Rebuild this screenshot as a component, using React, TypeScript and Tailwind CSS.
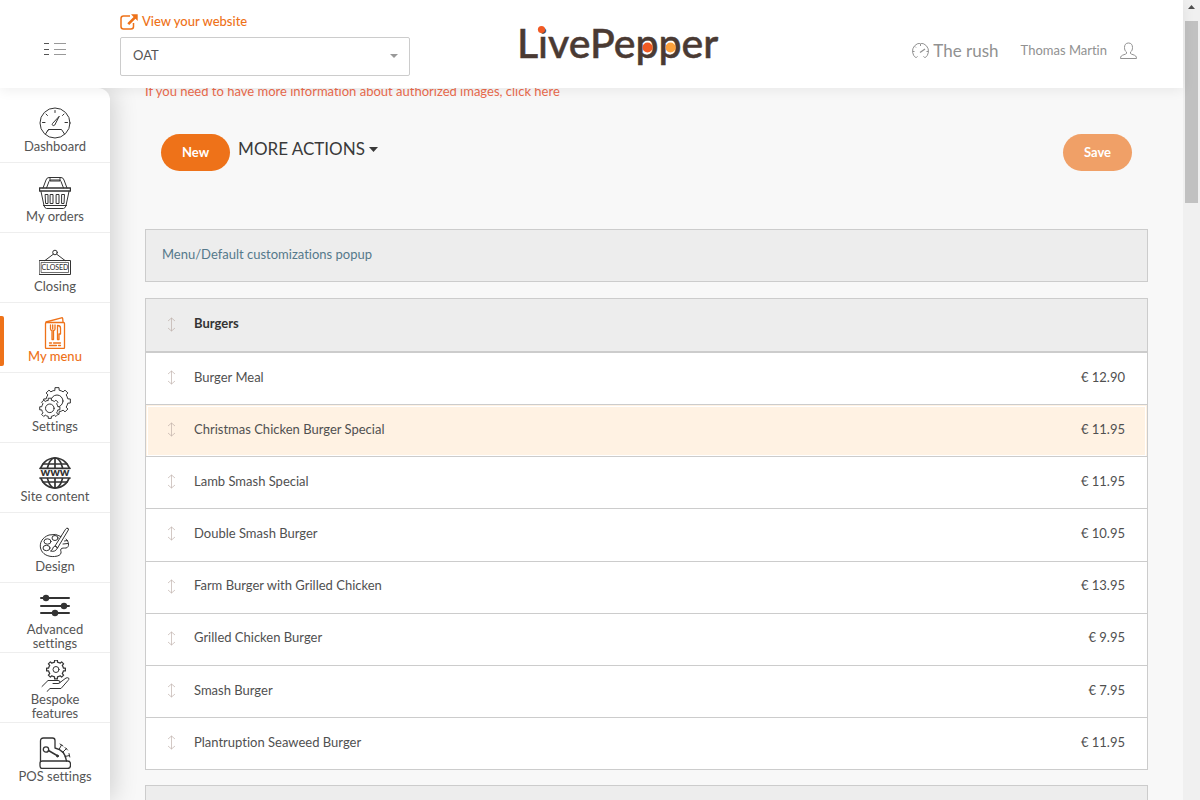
import type { ReactNode } from "react";

function gearPath(cx: number, cy: number, outer: number, inner: number, teeth: number) {
  const step = (Math.PI * 2) / teeth;
  const points: string[] = [];
  for (let i = 0; i < teeth; i++) {
    const a = i * step - Math.PI / 2;
    const corners: [number, number][] = [
      [inner, -0.25],
      [outer, -0.19],
      [outer, 0.19],
      [inner, 0.25],
      [inner, 0.5],
    ];
    for (const [r, k] of corners) {
      points.push(`${(cx + r * Math.cos(a + k * step)).toFixed(2)} ${(cy + r * Math.sin(a + k * step)).toFixed(2)}`);
    }
  }
  return `M${points.join("L")}Z`;
}

function Icon({ children, stroke = 1 }: { children: ReactNode; stroke?: number }) {
  return (
    <svg
      className="size-8 shrink-0"
      viewBox="0 0 32 32"
      fill="none"
      stroke="currentColor"
      strokeWidth={stroke}
      strokeLinecap="round"
      strokeLinejoin="round"
      aria-hidden="true"
    >
      {children}
    </svg>
  );
}

const DashboardIcon = (
  <Icon>
    <circle cx="16" cy="16" r="15" />
    <path d="M16 3.500v2M3.500 15.500H6M26 15.500h2.500M7 7l1.500 1.500M25 7l-1.500 1.500" />
    <path d="M20 9.500l-6.500 7c-1 1.500.8 3 2 1.800z" />
    <path d="M6.500 27l3-4.500h13l3 4.500M9.500 22.500l-1 1.500" />
  </Icon>
);

const OrdersIcon = (
  <Icon>
    <path d="M4 11L7 3Q7.800.5 10 .5h12Q24.200.5 25 3l3 8M7.500 11L10 4.500q.5-1.500 2-1.500h8q1.500 0 2 1.500l2.500 6.500M11 .5v3.500h10V.5" />
    <path d="M.5 11h31v3H.5z" strokeWidth="1.400" />
    <path d="M2 14.500l3 14q.5 2.500 2.500 3h17q2-.5 2.500-3l3-14M4.500 28.500h23" />
    <path d="M6.500 17.500h2.500v9H7zM11.500 17.500H14v9h-2.500zM17.500 17.500H20v9h-2.500zM23 17.500h2.500l-.5 9h-2z" />
  </Icon>
);

const ClosingIcon = (
  <Icon>
    <circle cx="16" cy="5.500" r="2.300" />
    <path d="M14.300 7.200L6 13.500M17.700 7.200l8.300 6.300" />
    <path d="M.5 13.500h31v14H.5z" />
    <path d="M2.500 15.500h27v10h-27z" strokeWidth=".7" />
    <text
      x="16"
      y="23"
      textAnchor="middle"
      fontSize="7"
      fontWeight="500"
      fill="currentColor"
      stroke="none"
      className="font-['Lato',sans-serif]"
    >
      CLOSED
    </text>
  </Icon>
);

const MenuIcon = (
  <Icon stroke={1.3}>
    <path d="M7.500 5.500h17q1 0 1 1v24q0 1-1 1h-17q-1 0-1-1v-24q0-1 1-1z" />
    <path d="M7 5L22.500.8q1-.2 1.200.8l.3 3.500" />
    <path d="M11.500 8v4q0 1.500 1.500 1.500v9h1.500v-9q1.500 0 1.500-1.500V8M13.700 8v4M18.500 8.500v14H20V17h1.500v-6q0-2.500-3-2.500z" />
    <path d="M10.500 26h2M14.500 26h7M10.500 28.500h7M19.500 28.500h2" />
  </Icon>
);

const SettingsIcon = (
  <Icon>
    <path d={gearPath(18, 14, 13.5, 11, 8)} />
    <circle cx="18" cy="14" r="6" />
    <path d={gearPath(10.8, 21.3, 10.2, 8.2, 8)} fill="#fff" />
    <circle cx="10.800" cy="21.300" r="4.300" />
  </Icon>
);

const SiteIcon = (
  <Icon stroke={1.7}>
    <circle cx="16" cy="16" r="15" />
    <ellipse cx="16" cy="16" rx="8" ry="15" />
    <path d="M16 1v30M4 7h24M4 25h24" />
    <path d="M0 11.500h32v9.500H0z" fill="#fff" stroke="none" />
    <path d="M1 11.300h30M1 21h30" />
    <text
      x="16"
      y="19"
      textAnchor="middle"
      fontSize="12"
      fontWeight="900"
      fill="currentColor"
      stroke="none"
      className="font-['Lato',sans-serif]"
    >
      www
    </text>
  </Icon>
);

const DesignIcon = (
  <Icon>
    <path d="M22 9.500Q17 6 10 8C3 10.500.5 16 1.500 21c1.500 6.500 8 9 14 8.500 4-.3 6-1.500 6.500-3.500.4-2-1-2.500 0-4 1-1.300 3-.8 5-1 2-.4 2.700-2 2.500-4.200-.2-2-1.200-3.500-2.500-4.800" />
    <path d="M29 1.500q-1.500-1-2.500.8L16 19l2.500 2L29.300 3q.7-1-.3-1.500z" />
    <path d="M16 19q-2 .5-2.500 3-.5 1.500-2 2 5 1.500 7-3z" />
    <ellipse cx="16" cy="11" rx="3" ry="2.500" />
    <ellipse cx="8.500" cy="14.500" rx="3.500" ry="2.700" />
    <ellipse cx="7.500" cy="21" rx="3.500" ry="2.700" />
    <path d="M24 17l5-.5M25.500 14l3-.5" />
  </Icon>
);

const AdvancedIcon = (
  <Icon stroke={2}>
    <path d="M2 8h28M2 16h28M2 23h28" />
    <g fill="currentColor" stroke="none">
      <circle cx="7" cy="8" r="3.200" />
      <circle cx="25" cy="16" r="3.200" />
      <circle cx="16" cy="23" r="3.200" />
    </g>
  </Icon>
);

const BespokeIcon = (
  <Icon>
    <path d={gearPath(17, 9.5, 9.5, 7.5, 8)} strokeWidth="1.200" />
    <circle cx="17" cy="9.500" r="3" />
    <path d="M3 26.500l6-6h10q2 0 2 1.500T19 23.500h-5M21 22.500l6-4.500q2-.8 3 .5 0 1-1 2l-7 8H11l-3 3" />
  </Icon>
);

const PosIcon = (
  <Icon>
    <path d="M1.500 24V4q0-3 3-3h9q2.500 0 2.500 2.500V11q10 2 11.500 13" strokeWidth="1.300" />
    <path d="M3.500 24h25q3 0 3 3v1.500q0 3-3 3h-25q-2.500 0-2.500-3V26q0-2 2.500-2z" strokeWidth="1.300" />
    <circle cx="7" cy="12.500" r="2.700" strokeWidth="1.300" />
    <path d="M9.500 13.500l8.500 5" strokeWidth="1.500" />
    <circle cx="18.500" cy="19" r="1" fill="currentColor" />
    <path d="M20 12.500L22.500 8M21 7l3 2M23.500 15.500l4-4M26 10.500l2.500 2.500M26 19.500l4.500-1M30 16.500l.8 3.500" />
  </Icon>
);

const navigation: { label: string; icon: ReactNode; active?: boolean }[] = [
  { label: "Dashboard", icon: DashboardIcon },
  { label: "My orders", icon: OrdersIcon },
  { label: "Closing", icon: ClosingIcon },
  { label: "My menu", icon: MenuIcon, active: true },
  { label: "Settings", icon: SettingsIcon },
  { label: "Site content", icon: SiteIcon },
  { label: "Design", icon: DesignIcon },
  { label: "Advanced settings", icon: AdvancedIcon },
  { label: "Bespoke features", icon: BespokeIcon },
  { label: "POS settings", icon: PosIcon },
];

const burgers: { name: string; price: string; highlighted?: boolean }[] = [
  { name: "Burger Meal", price: "€ 12.90" },
  { name: "Christmas Chicken Burger Special", price: "€ 11.95", highlighted: true },
  { name: "Lamb Smash Special", price: "€ 11.95" },
  { name: "Double Smash Burger", price: "€ 10.95" },
  { name: "Farm Burger with Grilled Chicken", price: "€ 13.95" },
  { name: "Grilled Chicken Burger", price: "€ 9.95" },
  { name: "Smash Burger", price: "€ 7.95" },
  { name: "Plantruption Seaweed Burger", price: "€ 11.95" },
];

function Logo() {
  return (
    <a href="#home" className="ml-[107px] shrink-0">
      <svg className="h-14 w-[210px] overflow-visible" viewBox="0 0 210 56" role="img" aria-label="LivePepper">
        <text
          x="0"
          y="42"
          fontSize="41"
          fontWeight="500"
          fill="#4a3a33"
          stroke="#4a3a33"
          strokeWidth=".5"
          className="font-['Lato',sans-serif]"
        >
          LivePepper
        </text>
        <circle cx="24.500" cy="13.500" r="3.600" fill="#f15a24" />
        <circle cx="130.500" cy="31.500" r="5" fill="#f15a24" />
        <circle cx="153.500" cy="31.500" r="5" fill="#fba13c" />
      </svg>
    </a>
  );
}

function Header() {
  return (
    <header className="relative z-20 flex h-22 shrink-0 items-center bg-white pr-[46px] shadow-[0_2px_12px_rgba(0,0,0,0.07)]">
      <div className="flex w-[120px] shrink-0 pt-2.5 pl-11">
        <button type="button" aria-label="Toggle menu">
          <svg className="h-4 w-6" viewBox="0 0 24 16" fill="none" aria-hidden="true">
            <path d="M0 2.500h5M0 8.500h5M0 13.500h5" stroke="#555" strokeWidth="1" />
            <path d="M10 2.500h12M10 8.500h12M10 13.500h12" stroke="#999" strokeWidth="1" />
          </svg>
        </button>
      </div>
      <div className="w-[290px] shrink-0">
        <a href="#website" className="flex h-[18px] items-center gap-1 text-[13px] font-medium text-[#ee7219]">
          <svg className="h-4 w-[18px]" viewBox="0 0 18 16" fill="none" aria-hidden="true">
            <path
              d="M10 2H3.500Q1 2 1 4.500v8Q1 15 3.500 15h7.500q2.500 0 2.500-2.500V9"
              stroke="currentColor"
              strokeWidth="1.500"
            />
            <path d="M11 .3h6.700V7l-2.200-2.200-6.300 6.300-1.900-1.900 6.300-6.300z" fill="currentColor" />
          </svg>
          View your website
        </a>
        <div className="relative mt-1.5">
          <select
            aria-label="Restaurant"
            className="h-[39px] w-full appearance-none rounded-xs border border-[#ccc] bg-white px-3 text-[13px] text-[#555]"
          >
            <option>OAT</option>
          </select>
          <svg
            className="pointer-events-none absolute top-[17px] right-3 h-1 w-2"
            viewBox="0 0 8 4"
            fill="#999"
            aria-hidden="true"
          >
            <path d="M0 0h8L4 4z" />
          </svg>
        </div>
      </div>
      <Logo />
      <div className="ml-auto flex items-center gap-[22px] pt-3.5 text-[#919191]">
        <a href="#rush" className="flex items-center gap-1 text-[17px] leading-5">
          <svg className="size-[17px]" viewBox="0 0 17 17" fill="none" stroke="currentColor" aria-hidden="true">
            <path d="M4 14.800A8 8 0 1 1 13 14.800l-1.500-1.500M4 14.800l1.500-1.500M8.500 1v2M1 8.500h1.500M14.500 8.500H16M3 3.500l1 1" />
            <path d="M8 9.500L13 6" strokeWidth="1.300" />
          </svg>
          The rush
        </a>
        <a href="#account" className="flex items-center gap-[13px] text-[13px]">
          Thomas Martin
          <svg className="h-[18px] w-[17px]" viewBox="0 0 17 18" fill="none" stroke="currentColor" aria-hidden="true">
            <path d="M8.500 1C5.800 1 4.500 2.800 4.500 5.500c0 2 .6 3.700 2 4.500v1.500c-1 1-4 1.300-5.200 2.500-.6.600-.8 1.500-.8 2.500h16c0-1-.2-1.900-.8-2.500-1.200-1.200-4.200-1.500-5.200-2.500V10c1.400-.8 2-2.500 2-4.500C12.500 2.800 11.200 1 8.500 1z" />
          </svg>
        </a>
      </div>
    </header>
  );
}

function Sidebar() {
  return (
    <nav
      aria-label="Main"
      className="z-10 w-[110px] shrink-0 overflow-hidden rounded-tr-xl bg-white pt-[5px] shadow-[4px_0_24px_rgba(0,0,0,0.16)]"
    >
      <ul>
        {navigation.map((item) => (
          <li key={item.label} className="relative h-[70px] border-b border-[#eee] last:border-b-0">
            {item.active && <span className="absolute top-[13px] left-0 h-[50px] w-1 rounded-r-xs bg-[#ee7219]" />}
            <a
              href="#section"
              aria-current={item.active ? "page" : undefined}
              className={`flex h-full flex-col items-center justify-center px-4 pt-1 text-center text-[13px] leading-[14px] ${
                item.active ? "font-medium text-[#ee7219]" : "text-[#333]"
              }`}
            >
              {item.icon}
              <span className={item.active ? "" : "text-[#555]"}>{item.label}</span>
            </a>
          </li>
        ))}
      </ul>
    </nav>
  );
}

function DragHandle({ name }: { name: string }) {
  return (
    <button type="button" aria-label={`Move ${name}`} className="flex w-full justify-center pl-0.5 text-[#b5a59e]/60">
      <svg className="h-[15px] w-[9px]" viewBox="0 0 9 15" fill="none" stroke="currentColor" aria-hidden="true">
        <path d="M4.500 1v13M1 4l3.500-3L8 4M1 11l3.500 3L8 11" />
      </svg>
    </button>
  );
}

function Actions() {
  return (
    <div className="mt-[33px] flex items-start justify-between px-4">
      <div className="flex items-start gap-2">
        <button type="button" className="h-[37px] rounded-full bg-[#ee7219] px-[21px] text-[13px] font-bold text-white">
          New
        </button>
        <button type="button" className="flex h-[30px] items-center gap-1 text-[17px] text-[#3a3a3a]">
          MORE ACTIONS
          <svg className="h-[5px] w-[9px]" viewBox="0 0 9 5" fill="currentColor" aria-hidden="true">
            <path d="M0 0h9L4.500 5z" />
          </svg>
        </button>
      </div>
      <button type="button" className="h-[37px] rounded-full bg-[#f0a067] px-[21px] text-[13px] font-bold text-white">
        Save
      </button>
    </div>
  );
}

function MenuTable() {
  return (
    <table className="mt-4 h-[472px] w-full border-separate border-spacing-0 border border-b-0 border-[#ccc] bg-white text-[13px] text-[#505050]">
      <thead>
        <tr className="h-[54px] bg-[#ededed]">
          <th scope="col" className="w-12 border-b-2 border-[#ccc] pb-0.5">
            <DragHandle name="Burgers" />
          </th>
          <th scope="col" colSpan={2} className="border-b-2 border-[#ccc] pb-0.5 text-left font-bold text-[#333]">
            Burgers
          </th>
        </tr>
      </thead>
      <tbody>
        {burgers.map((item) => (
          <tr
            key={item.name}
            className={
              item.highlighted ? "h-[52px] bg-[#fff2e3] outline-1 -outline-offset-2 outline-white" : "h-[52px]"
            }
          >
            <td className="border-b border-[#ccc] pb-0.5">
              <DragHandle name={item.name} />
            </td>
            <td className="border-b border-[#ccc] pb-0.5">{item.name}</td>
            <td className="border-b border-[#ccc] pr-[22px] pb-0.5 text-right">{item.price}</td>
          </tr>
        ))}
      </tbody>
    </table>
  );
}

function Scrollbar() {
  return (
    <div className="flex w-[17px] shrink-0 flex-col items-center bg-[#f0f0f0]" aria-hidden="true">
      <svg className="h-[21px] w-[7px] shrink-0" viewBox="0 0 7 21" fill="#505050">
        <path d="M0 9h7L3.500 5z" />
      </svg>
      <div className="h-[182px] w-[13px] bg-[#c1c1c1]" />
    </div>
  );
}

export default function App() {
  return (
    <div className="flex h-screen overflow-hidden bg-[#f8f8f8] font-['Lato',sans-serif] [font-variant-ligatures:none]">
      <div className="flex min-w-0 flex-1 flex-col">
        <Header />
        <div className="flex min-h-0 flex-1">
          <Sidebar />
          <main className="min-w-0 flex-1 overflow-hidden px-[35px]">
            <div className="-mt-[7px]">
              <a href="#images" className="block text-[13px] leading-5 text-[#ea6a4c]">
                If you need to have more information about authorized images, click here
              </a>
              <Actions />
              <section className="mt-[58px] flex h-[53px] items-center border border-[#ccc] bg-[#ededed] px-4 pb-0.5 text-[13px]">
                <a href="#customizations" className="text-[#55798b]">
                  Menu/Default customizations popup
                </a>
              </section>
              <MenuTable />
              <section className="mt-[15px] h-[54px] border border-[#ccc] bg-[#ededed]" />
            </div>
          </main>
        </div>
      </div>
      <Scrollbar />
    </div>
  );
}
